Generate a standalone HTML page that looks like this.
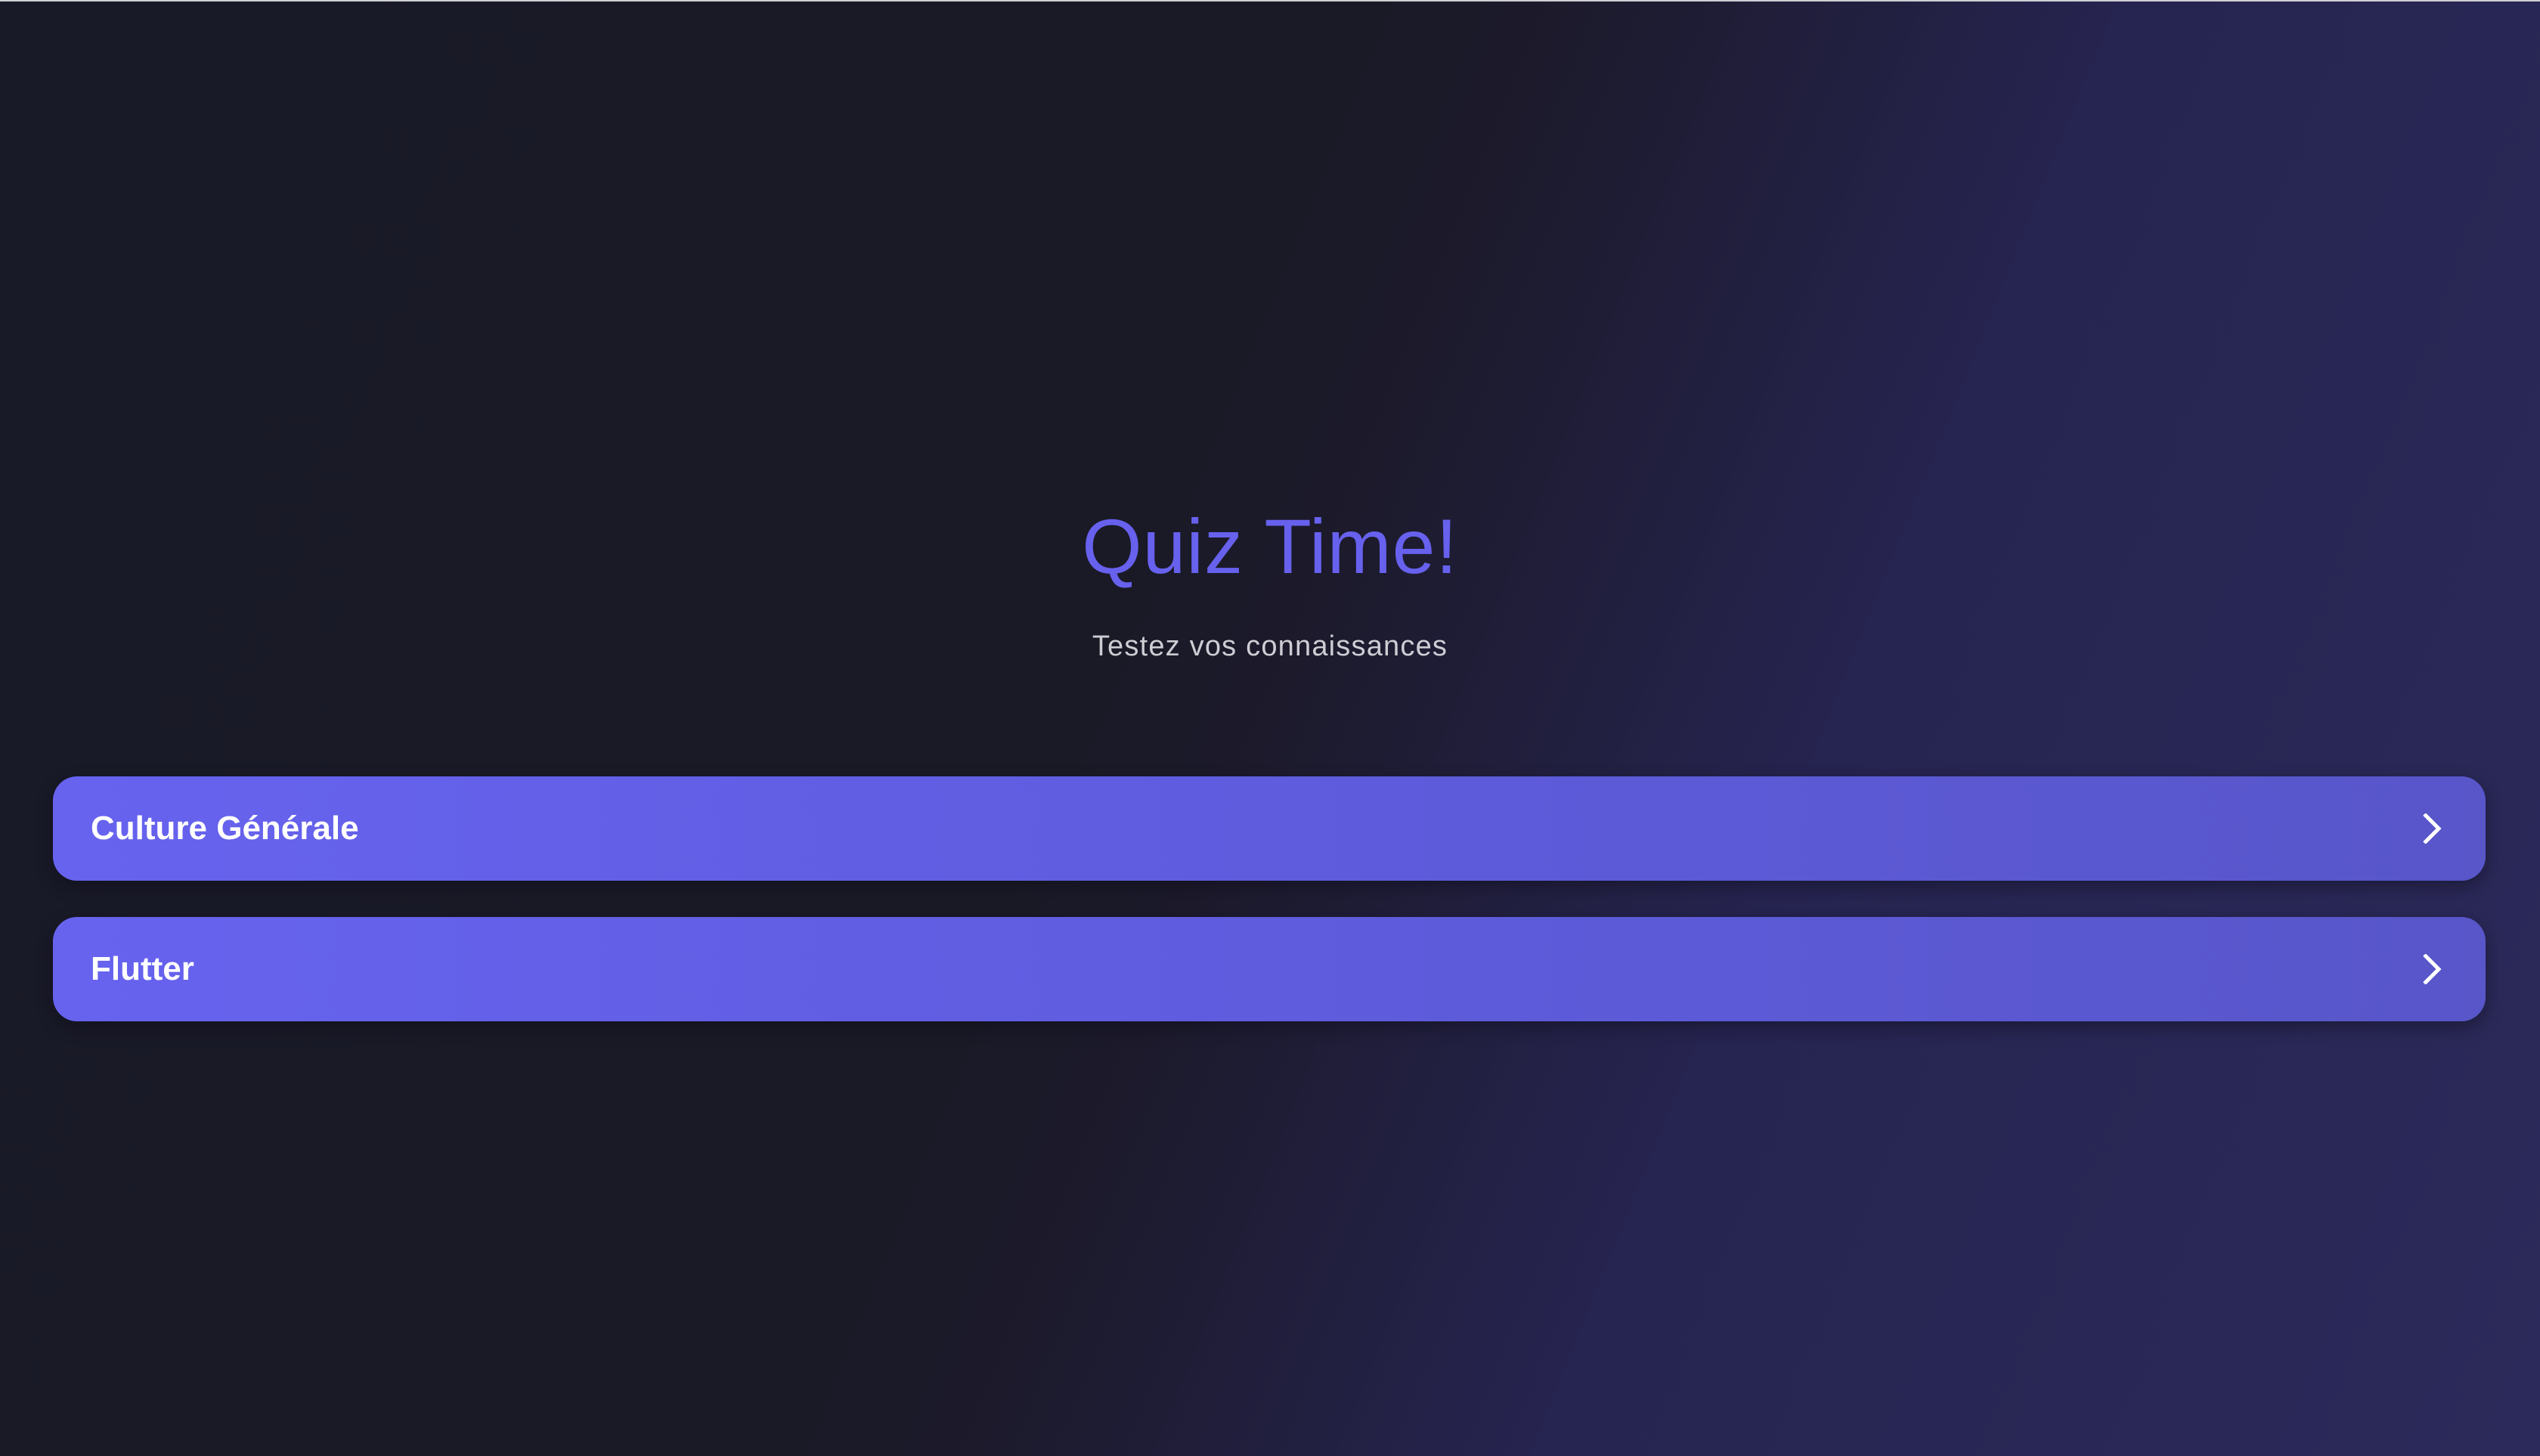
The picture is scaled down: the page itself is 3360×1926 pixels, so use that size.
<!DOCTYPE html>
<html><head><meta charset="utf-8"><style>
html,body{margin:0;padding:0}
body{width:3360px;height:1926px;overflow:hidden;position:relative;font-family:"Liberation Sans",sans-serif;
background:linear-gradient(112deg,#191a27 0%,#1a1a27 44%,#1c1a2b 50%,#262450 68%,#2c2a5a 100%);}
.topline{position:absolute;left:0;top:0;width:3360px;height:2px;background:#cfcfd4}
.title{position:absolute;left:0;width:3360px;text-align:center;top:663px;font-size:102px;line-height:120px;color:#6761ee;letter-spacing:1px;font-weight:normal}
.sub{position:absolute;left:0;width:3360px;text-align:center;top:833px;font-size:38px;line-height:44px;color:#cdcdd4;letter-spacing:1.2px}
.btn{position:absolute;left:70px;width:3218px;height:138px;border-radius:32px;
background:linear-gradient(90deg,#6763ef 0%,#5f5cde 50%,#5856c9 100%);
box-shadow:0 8px 22px rgba(10,10,25,0.45)}
.btn span{position:absolute;left:50px;top:0;line-height:138px;font-size:44px;font-weight:bold;color:#fff;letter-spacing:0px}
.btn svg{position:absolute;left:3127px;top:49px}
</style></head><body>
<div class="topline"></div>
<div class="title">Quiz Time!</div>
<div class="sub">Testez vos connaissances</div>
<div class="btn" style="top:1027px"><span>Culture Générale</span>
<svg width="40" height="40" viewBox="0 0 40 40"><path d="M10 1 L29 20 L10 39" fill="none" stroke="#fff" stroke-width="5"/></svg></div>
<div class="btn" style="top:1213px"><span>Flutter</span>
<svg width="40" height="40" viewBox="0 0 40 40"><path d="M10 1 L29 20 L10 39" fill="none" stroke="#fff" stroke-width="5"/></svg></div>
</body></html>
